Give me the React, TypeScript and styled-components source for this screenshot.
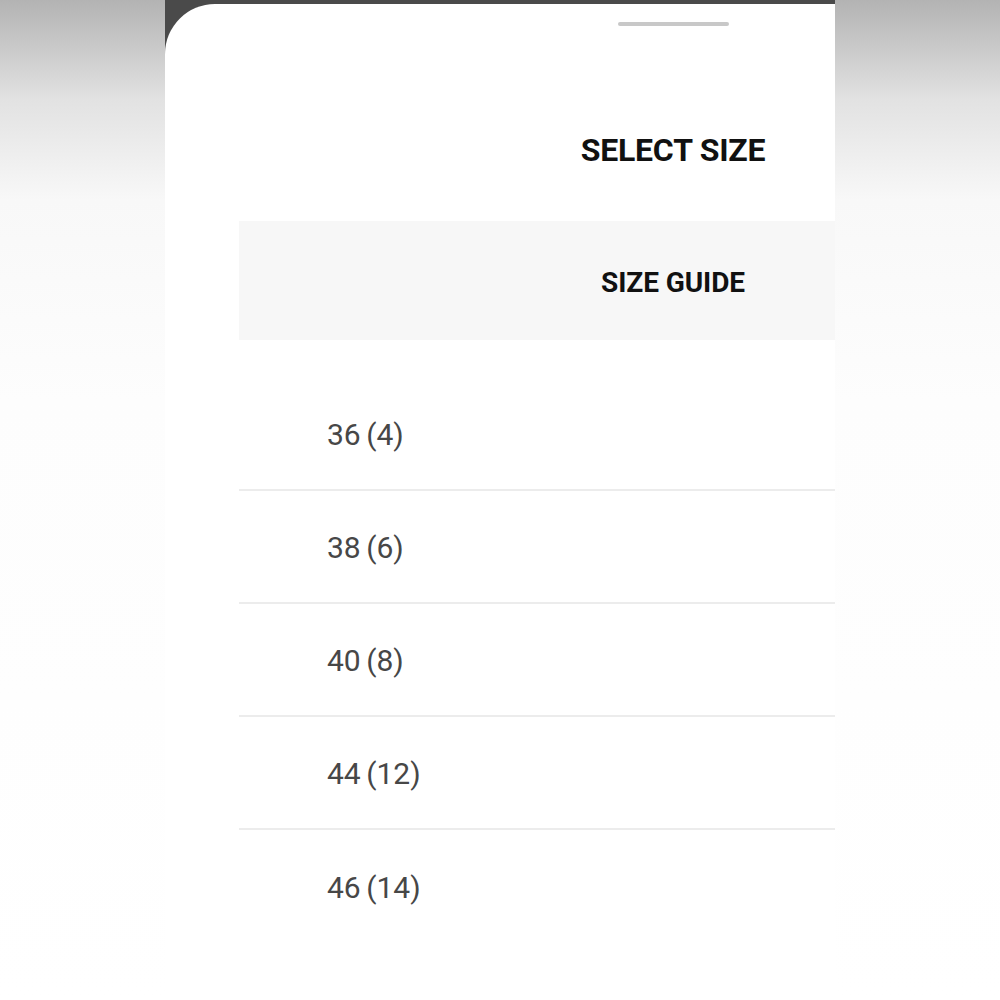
import styled, { createGlobalStyle } from "styled-components";

const Global = createGlobalStyle`
  html, body {
    margin: 0;
    padding: 0;
    background: #ffffff;
  }
  body {
    font-family: Roboto, "Liberation Sans", sans-serif;
  }
`;

const Page = styled.div`
  display: flex;
  height: 1000px;
  overflow: hidden;
  padding-left: 165px;
  background: linear-gradient(180deg, #b3b3b3 0px, #e2e2e2 100px, #f8f8f8 200px, #fdfdfd 400px, #ffffff 1000px);
`;

const Frame = styled.div`
  width: 670px;
  height: 1000px;
  padding-top: 4px;
  box-sizing: border-box;
  background: #4a4a4a;
`;

const Sheet = styled.div`
  height: 100%;
  background: #ffffff;
  border-top-left-radius: 50px;
  overflow: hidden;
`;

const Column = styled.div`
  width: 868px;
  margin-left: 74px;
  display: flex;
  flex-direction: column;
`;

const Handle = styled.div`
  align-self: center;
  width: 111px;
  height: 4px;
  margin-top: 18px;
  border-radius: 2px;
  background: #c8c8c8;
`;

const Title = styled.h1`
  margin: 104px 0 0;
  font-size: 32px;
  line-height: 40px;
  font-weight: 700;
  color: #111;
  text-align: center;
  letter-spacing: -0.2px;
`;

const GuideBox = styled.div`
  margin-top: 51px;
  height: 119px;
  display: flex;
  align-items: center;
  justify-content: center;
  padding-top: 4px;
  box-sizing: border-box;
  background: #f7f7f7;
`;

const GuideLabel = styled.span`
  font-size: 28px;
  font-weight: 700;
  color: #111;
  letter-spacing: -0.1px;
`;

const List = styled.ul`
  list-style: none;
  margin: 0;
  padding: 38px 0 0;
`;

const Row = styled.li<{ $last?: boolean }>`
  height: 113px;
  box-sizing: border-box;
  display: flex;
  align-items: center;
  padding: 2px 0 0 88px;
  border-bottom: ${(p) => (p.$last ? "none" : "2px solid #ececec")};
  font-size: 30px;
  color: #474747;
  word-spacing: -2px;
`;

const sizes = ["36 (4)", "38 (6)", "40 (8)", "44 (12)", "46 (14)"];

export default function App() {
  return (
    <>
      <Global />
      <Page>
        <Frame>
          <Sheet>
            <Column>
              <Handle />
              <Title>SELECT SIZE</Title>
              <GuideBox>
                <GuideLabel>SIZE GUIDE</GuideLabel>
              </GuideBox>
              <List>
                {sizes.map((s, i) => (
                  <Row key={s} $last={i === sizes.length - 1}>
                    {s}
                  </Row>
                ))}
              </List>
            </Column>
          </Sheet>
        </Frame>
      </Page>
    </>
  );
}
